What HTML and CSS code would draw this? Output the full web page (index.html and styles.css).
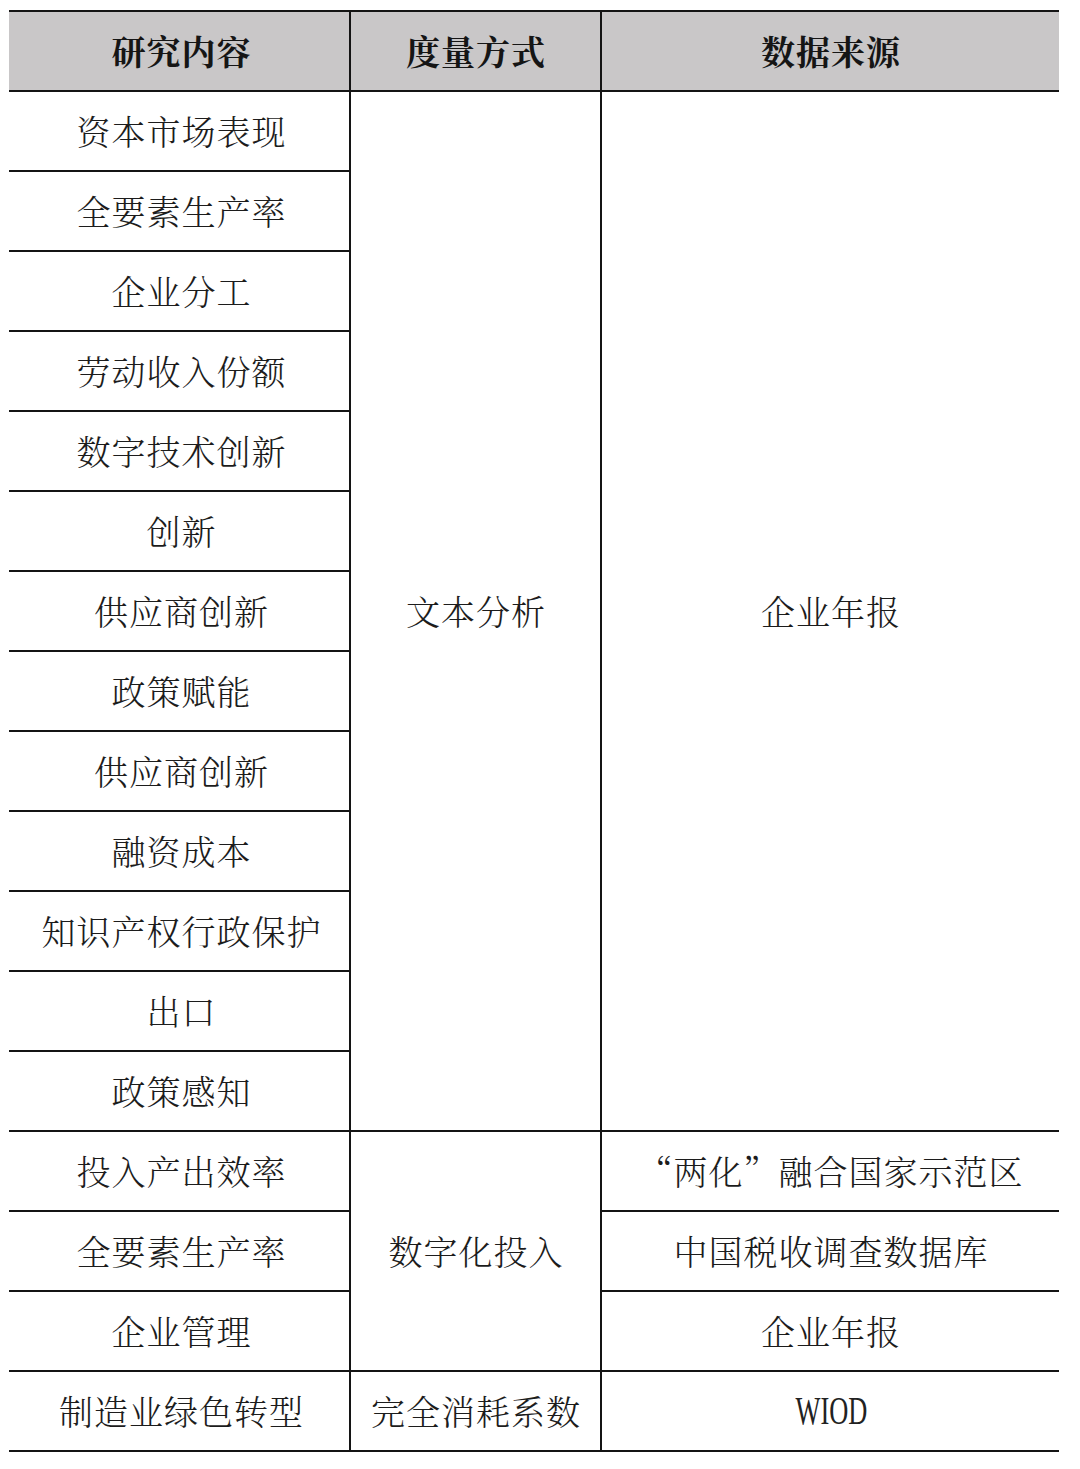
FILE: index.html
```html
<!DOCTYPE html>
<html lang="zh-CN">
<head>
<meta charset="utf-8">
<title>研究内容与数据来源</title>
<link rel="stylesheet" href="styles.css">
</head>
<body>
<table class="grid">
  <colgroup>
    <col class="c1">
    <col class="c2">
    <col class="c3">
  </colgroup>
  <thead>
    <tr class="head">
      <th>研究内容</th>
      <th>度量方式</th>
      <th>数据来源</th>
    </tr>
  </thead>
  <tbody>
    <tr><td>资本市场表现</td><td rowspan="13">文本分析</td><td rowspan="13">企业年报</td></tr>
    <tr><td>全要素生产率</td></tr>
    <tr><td>企业分工</td></tr>
    <tr><td>劳动收入份额</td></tr>
    <tr><td>数字技术创新</td></tr>
    <tr><td>创新</td></tr>
    <tr><td>供应商创新</td></tr>
    <tr><td>政策赋能</td></tr>
    <tr><td>供应商创新</td></tr>
    <tr><td>融资成本</td></tr>
    <tr><td>知识产权行政保护</td></tr>
    <tr><td>出口</td></tr>
    <tr><td>政策感知</td></tr>
    <tr><td>投入产出效率</td><td rowspan="3">数字化投入</td><td>“两化”融合国家示范区</td></tr>
    <tr><td>全要素生产率</td><td>中国税收调查数据库</td></tr>
    <tr><td>企业管理</td><td>企业年报</td></tr>
    <tr><td>制造业绿色转型</td><td>完全消耗系数</td><td><span class="latin">WIOD</span></td></tr>
  </tbody>
</table>
</body>
</html>
```

FILE: styles.css
```css
html, body {
  margin: 0;
  padding: 0;
  background: #ffffff;
}

body {
  font-family: "Noto Serif CJK SC", "Noto Sans CJK SC", sans-serif;
  color: #1c1c1c;
}

.grid {
  border-collapse: collapse;
  margin: 10px 0 0 9px;
  width: 1050px;
  table-layout: fixed;
}

.c1 { width: 341px; }
.c2 { width: 251px; }
.c3 { width: 458px; }

.grid th,
.grid td {
  border: 2px solid #141414;
  height: 78px;
  padding: 0 0 0 1px;
  text-align: center;
  vertical-align: middle;
  font-size: 34px;
  letter-spacing: 1px;
  line-height: 1;
  white-space: nowrap;
}

.grid tr > :first-child {
  border-left: none;
  padding-left: 5px;
}
.grid tr > :last-child { border-right: none; }

.grid th {
  background: #c9c7c8;
  font-weight: 700;
  color: #151515;
}

.grid td {
  font-weight: 300;
}

.latin {
  display: inline-block;
  font-family: "Liberation Serif", serif;
  font-size: 40px;
  letter-spacing: 0;
  transform: scaleX(0.66);
  color: #222;
}
```
